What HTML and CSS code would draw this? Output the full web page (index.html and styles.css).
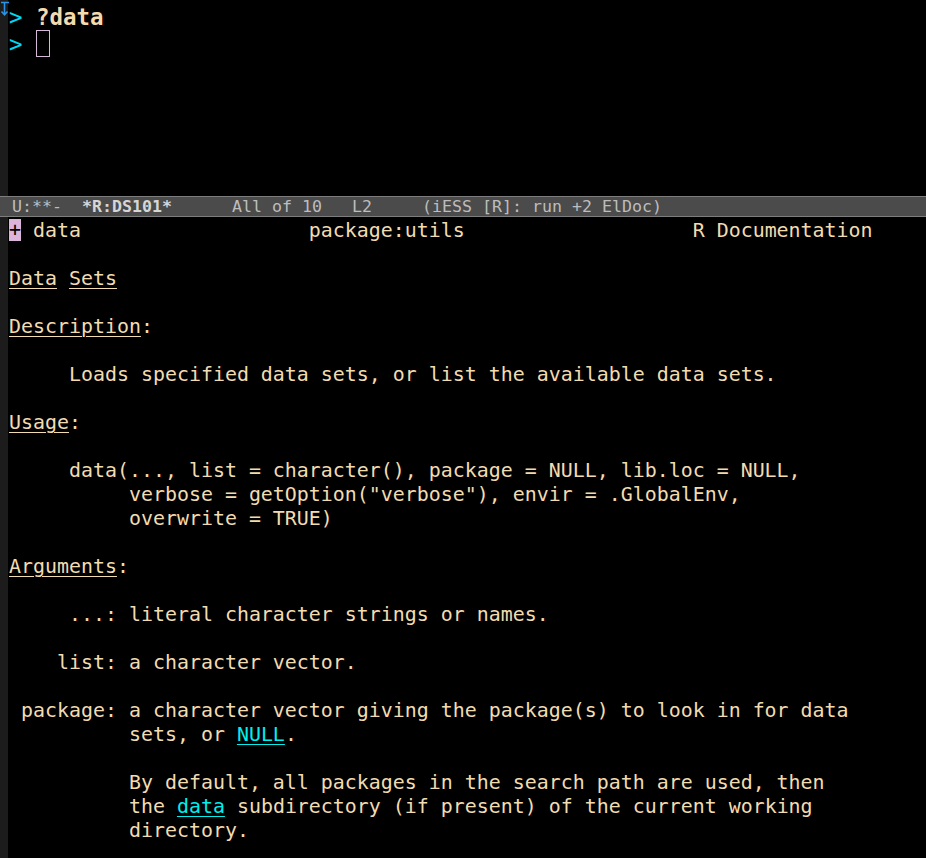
FILE: index.html
```html
<!DOCTYPE html>
<html>
<head>
<meta charset="utf-8">
<link rel="stylesheet" href="styles.css">
</head>
<body>
<div class="frame">
  <div class="window top">
    <div class="fringe">
      <svg class="boundary" width="9" height="17" viewBox="0 0 9 17">
        <path d="M1 2.5 H9 M4.5 2.5 V15 M1.5 11.5 L4.5 14.8 L7.5 11.5" fill="none" stroke="#2a93e8" stroke-width="1.6"/>
      </svg>
    </div>
    <div class="buffer repl">
      <div class="line"><span class="prompt">&gt;</span> <span class="input">?data</span></div>
      <div class="line"><span class="prompt">&gt;</span> <span class="hollow-cursor"> </span></div>
    </div>
  </div>
  <div class="modeline"> U:**-  <b class="bufname">*R:DS101*</b>      All of 10   L2     (iESS [R]: run +2 ElDoc)</div>
  <div class="window help">
    <div class="fringe"></div>
    <div class="buffer doc">
      <div class="line"><span class="cursor">+</span> data                   package:utils                   R Documentation</div>
      <div class="line"> </div>
      <div class="line"><span class="ul">Data</span> <span class="ul">Sets</span></div>
      <div class="line"> </div>
      <div class="line"><span class="ul">Description</span>:</div>
      <div class="line"> </div>
      <div class="line">     Loads specified data sets, or list the available data sets.</div>
      <div class="line"> </div>
      <div class="line"><span class="ul">Usage</span>:</div>
      <div class="line"> </div>
      <div class="line">     data(..., list = character(), package = NULL, lib.loc = NULL,</div>
      <div class="line">          verbose = getOption("verbose"), envir = .GlobalEnv,</div>
      <div class="line">          overwrite = TRUE)</div>
      <div class="line"> </div>
      <div class="line"><span class="ul">Arguments</span>:</div>
      <div class="line"> </div>
      <div class="line">     ...: literal character strings or names.</div>
      <div class="line"> </div>
      <div class="line">    list: a character vector.</div>
      <div class="line"> </div>
      <div class="line"> package: a character vector giving the package(s) to look in for data</div>
      <div class="line">          sets, or <span class="link">NULL</span>.</div>
      <div class="line"> </div>
      <div class="line">          By default, all packages in the search path are used, then</div>
      <div class="line">          the <span class="link">data</span> subdirectory (if present) of the current working</div>
      <div class="line">          directory.</div>
      <div class="line"> </div>
    </div>
  </div>
</div>
</body>
</html>
```

FILE: styles.css
```css
html, body {
  margin: 0;
  padding: 0;
  background: #000;
}

.frame {
  width: 926px;
  height: 858px;
  display: flex;
  flex-direction: column;
  overflow: hidden;
  background: #000;
  font-family: "DejaVu Sans Mono", monospace;
  color: #f3dbb0;
}

.window {
  display: flex;
  flex-direction: row;
}

.window.top {
  height: 196px;
  flex: none;
}

.window.help {
  flex: 1;
  overflow: hidden;
}

.fringe {
  width: 8px;
  flex: none;
  background: #1c1c1c;
}

.boundary {
  display: block;
}

.buffer {
  flex: 1;
  padding-left: 1px;
}

.line {
  white-space: pre;
}

.repl {
  padding-top: 4px;
  font-size: 22.42px;
  line-height: 27px;
}

.repl .line {
  height: 27px;
}

.doc {
  padding-top: 2px;
  font-size: 19.93px;
  line-height: 24px;
}

.doc .line {
  height: 24px;
}

.prompt {
  color: #00d7f0;
}

.input {
  font-weight: bold;
  color: #f3dbb0;
}

.hollow-cursor {
  display: inline-block;
  width: 13.5px;
  height: 27px;
  margin-top: -1px;
  box-sizing: border-box;
  border: 1px solid #d8b8d8;
  vertical-align: top;
}

.cursor {
  display: inline-block;
  width: 12px;
  height: 22px;
  margin-top: 0;
  background: #dcb4dc;
  color: #000;
  vertical-align: top;
  line-height: 22px;
}

.modeline {
  flex: none;
  height: 19px;
  border-top: 1px solid #7d7d7d;
  border-bottom: 1px solid #7d7d7d;
  background: #4b4b4b;
  color: #bdbdbd;
  font-size: 16.61px;
  line-height: 20px;
  padding-left: 2px;
  white-space: pre;
}

.bufname {
  color: #d6d6d6;
  font-weight: bold;
}

.ul {
  text-decoration: underline;
  text-decoration-thickness: 1px;
  text-underline-offset: 3px;
}

.link {
  color: #00eeee;
  text-decoration: underline;
  text-decoration-thickness: 1px;
  text-underline-offset: 3px;
}
```
